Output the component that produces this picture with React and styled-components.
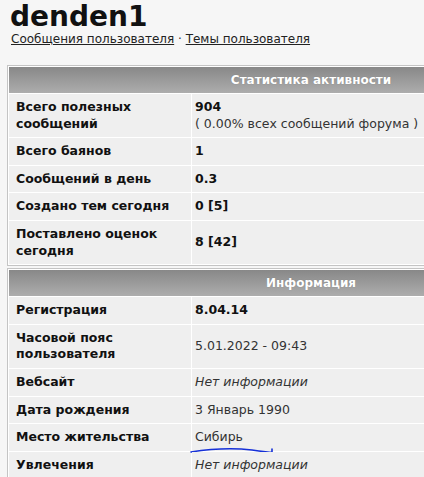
import styled, { createGlobalStyle } from "styled-components";

const GlobalStyle = createGlobalStyle`
  html, body {
    margin: 0;
    padding: 0;
    background: #f6f6f6;
    overflow: hidden;
  }
  body {
    font-family: "DejaVu Sans", Verdana, sans-serif;
    color: #111;
  }
`;

const Page = styled.div`
  width: 700px;
  padding: 2px 7px 0;
`;

const Title = styled.h1`
  margin: 0;
  padding-left: 3px;
  font-size: 28px;
  line-height: 29px;
  font-weight: bold;
  color: #111;
`;

const Links = styled.div`
  padding-left: 4px;
  font-size: 12px;
  line-height: 16px;
  color: #333;
  margin-bottom: 18px;
`;

const UserLink = styled.a`
  color: #222;
  text-decoration: underline;
`;

const StatTable = styled.table`
  width: 608px;
  border: 1px solid #c4c4c4;
  background: #fff;
  border-collapse: separate;
  border-spacing: 1px;
  margin-bottom: 2px;
  font-size: 12.5px;
  line-height: 16.6px;
`;

const HeadCell = styled.th`
  height: 26px;
  padding: 0;
  background: linear-gradient(#888, #adadad);
  color: #fff;
  font-size: 12px;
  font-weight: bold;
  text-align: center;
  text-shadow: 0 0 1px rgba(0, 0, 0, 0.2);
`;

const Label = styled.td`
  width: 168px;
  padding: 5px 7px;
  background: #efefef;
  font-weight: bold;
  vertical-align: middle;
`;

const Value = styled.td`
  position: relative;
  padding: 5px 6px 5px 3px;
  background: #efefef;
  font-weight: ${(p) => (p.$bold ? "bold" : "normal")};
  font-style: ${(p) => (p.$italic ? "italic" : "normal")};
  color: ${(p) => (p.$bold ? "#111" : "#333")};
  vertical-align: middle;
`;

const Note = styled.div`
  font-weight: normal;
  color: #333;
`;

const Scribble = styled.svg`
  position: absolute;
  left: -2px;
  top: 21px;
  pointer-events: none;
`;

const stats = [
  { label: "Всего полезных сообщений", value: "904", note: "( 0.00% всех сообщений форума )", bold: true },
  { label: "Всего баянов", value: "1", bold: true },
  { label: "Сообщений в день", value: "0.3", bold: true },
  { label: "Создано тем сегодня", value: "0 [5]", bold: true },
  { label: "Поставлено оценок сегодня", value: "8 [42]", bold: true },
];

const info = [
  { label: "Регистрация", value: "8.04.14", bold: true },
  { label: "Часовой пояс пользователя", value: "5.01.2022 - 09:43" },
  { label: "Вебсайт", value: "Нет информации", italic: true },
  { label: "Дата рождения", value: "3 Январь 1990" },
  { label: "Место жительства", value: "Сибирь", mark: true },
  { label: "Увлечения", value: "Нет информации", italic: true },
];

function Section({ title, rows }) {
  return (
    <StatTable>
      <thead>
        <tr>
          <HeadCell colSpan={2}>{title}</HeadCell>
        </tr>
      </thead>
      <tbody>
        {rows.map((r) => (
          <tr key={r.label}>
            <Label>{r.label}</Label>
            <Value $bold={r.bold} $italic={r.italic}>
              {r.value}
              {r.note && <Note>{r.note}</Note>}
              {r.mark && (
                <Scribble width="86" height="10" viewBox="0 0 86 10">
                  <path
                    d="M1 7 C 20 4, 45 3, 62 5 S 78 8, 82 7 L 82 4"
                    fill="none"
                    stroke="#1530d8"
                    strokeWidth="1.6"
                    strokeLinecap="round"
                  />
                </Scribble>
              )}
            </Value>
          </tr>
        ))}
      </tbody>
    </StatTable>
  );
}

export default function App() {
  return (
    <>
      <GlobalStyle />
      <Page>
        <Title>denden1</Title>
        <Links>
          <UserLink href="#">Сообщения пользователя</UserLink> ·{" "}
          <UserLink href="#">Темы пользователя</UserLink>
        </Links>
        <Section title="Статистика активности" rows={stats} />
        <Section title="Информация" rows={info} />
      </Page>
    </>
  );
}
